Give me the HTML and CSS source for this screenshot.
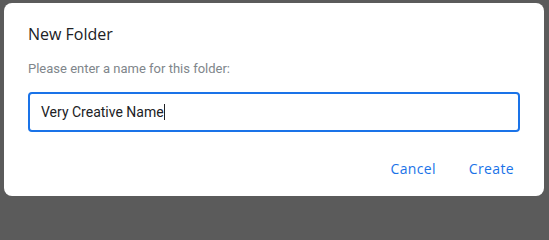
FILE: index.html
```html
<!DOCTYPE html>
<html>
<head>
<meta charset="utf-8">
<link rel="stylesheet" href="styles.css">
</head>
<body>
<div class="dialog">
  <div class="title">New Folder</div>
  <div class="label">Please enter a name for this folder:</div>
  <div class="field"><span class="value">Very Creative Name</span><span class="caret"></span></div>
  <div class="actions">
    <button class="btn">Cancel</button>
    <button class="btn">Create</button>
  </div>
</div>
</body>
</html>
```
FILE: styles.css
```css
html, body {
  margin: 0;
  padding: 0;
}
body {
  width: 549px;
  height: 203px;
  background: #5b5b5b;
  overflow: hidden;
  font-family: Roboto, "Liberation Sans", sans-serif;
}
.dialog {
  margin: 3px 0 0 4px;
  width: 540px;
  height: 193px;
  box-sizing: border-box;
  background: #fff;
  border-radius: 8px;
  padding: 19px 24px 0 24px;
  display: flex;
  flex-direction: column;
}
.title {
  font-family: "Open Sans", Roboto, sans-serif;
  font-size: 16px;
  line-height: 24px;
  font-weight: 400;
  color: #202124;
}
.label {
  margin-top: 13px;
  font-size: 13px;
  line-height: 20px;
  color: #80868b;
}
.field {
  margin-top: 13px;
  width: 492px;
  height: 40px;
  box-sizing: border-box;
  border: 2px solid #1a73e8;
  border-radius: 4px;
  padding: 0 11px;
  display: flex;
  align-items: center;
  font-size: 14px;
  color: #202124;
}
.caret {
  display: inline-block;
  width: 1px;
  height: 16px;
  background: #202124;
}
.actions {
  margin-top: 27px;
  display: flex;
  justify-content: flex-end;
  gap: 23px;
  padding-right: 1px;
}
.btn {
  border: none;
  background: none;
  padding: 0 5px;
  font-family: "Open Sans", Roboto, sans-serif;
  font-size: 14px;
  font-weight: 500;
  letter-spacing: 0.35px;
  color: #1a73e8;
  line-height: 20px;
}
```
